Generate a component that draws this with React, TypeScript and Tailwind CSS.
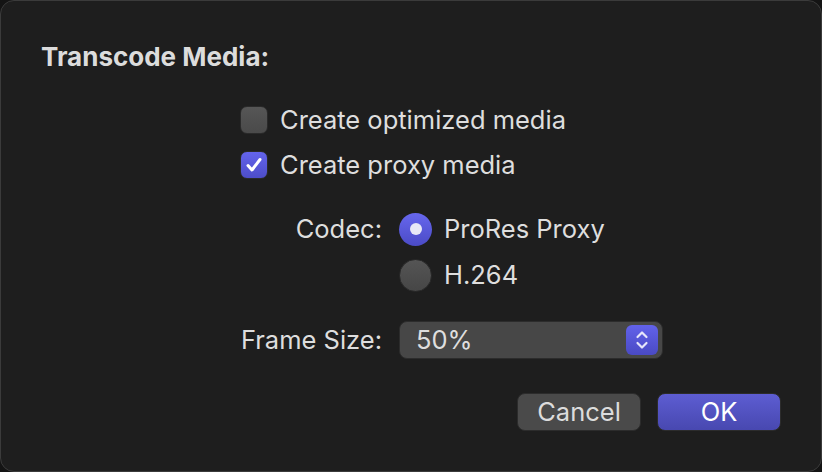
import React from "react";

export default function App() {
  return (
    <div className="w-[822px] h-[472px] bg-[#141414]" style={{ fontFamily: "Inter, 'Noto Sans', sans-serif" }}>
      <div className="w-full h-full rounded-[14px] border border-[#3b3b3b] bg-[#1e1e1e] flex flex-col text-[#dedede] antialiased">
        <div className="pl-[40px] pt-[40px] text-[26px] leading-[32px] font-bold text-[#dcdcdc]">Transcode Media:</div>

        <div className="mt-[33px] pl-[239px] grid grid-cols-[142px_1fr] gap-x-[17px]">
          <div className="col-span-2 flex items-center gap-[12px] h-[28px]">
            <div className="w-[28px] h-[28px] rounded-[7px] bg-gradient-to-b from-[#565656] to-[#4a4a4a] border border-[#2a2a2a]" />
            <span className="text-[25.5px] leading-[28px]">Create optimized media</span>
          </div>
          <div className="col-span-2 flex items-center gap-[12px] h-[28px] mt-[17px]">
            <div className="w-[28px] h-[28px] rounded-[7px] bg-gradient-to-b from-[#6464ec] to-[#4d4dc9] border border-[#2a2a2a] flex items-center justify-center">
              <svg width="20" height="20" viewBox="0 0 20 20" fill="none">
                <path d="M4 10.5 L8 15 L16 4.5" stroke="white" strokeWidth="3" strokeLinecap="round" strokeLinejoin="round" />
              </svg>
            </div>
            <span className="text-[25.5px] leading-[28px]">Create proxy media</span>
          </div>

          <div className="mt-[33px] h-[34px] flex items-center justify-end text-[25.5px]">Codec:</div>
          <div className="mt-[33px] h-[34px] flex items-center gap-[12px]">
            <div className="w-[33px] h-[33px] rounded-full bg-gradient-to-b from-[#6767ee] to-[#4b4bc6] flex items-center justify-center">
              <div className="w-[12px] h-[12px] rounded-full bg-[#e8e8f6]" />
            </div>
            <span className="text-[25.5px]">ProRes Proxy</span>
          </div>
          <div />
          <div className="mt-[12px] h-[34px] flex items-center gap-[12px]">
            <div className="w-[33px] h-[33px] rounded-full bg-gradient-to-b from-[#555555] to-[#464646] border border-[#2a2a2a]" />
            <span className="text-[25.5px]">H.264</span>
          </div>

          <div className="mt-[29px] h-[38px] flex items-center justify-end text-[25.5px]">Frame Size:</div>
          <div className="mt-[29px] h-[38px] w-[264px] rounded-[8px] bg-[#474747] border border-[#2c2c2c] flex items-center justify-between pl-[16px] pr-[4px]">
            <span className="text-[25.5px]">50%</span>
            <div className="w-[32px] h-[30px] rounded-[6px] bg-gradient-to-b from-[#6262ea] to-[#4a4ac4] flex items-center justify-center">
              <svg width="16" height="22" viewBox="0 0 16 22" fill="none">
                <path d="M3.5 8 L8 3.5 L12.5 8" stroke="#e6e6fa" strokeWidth="2.2" strokeLinecap="round" strokeLinejoin="round" />
                <path d="M3.5 14 L8 18.5 L12.5 14" stroke="#e6e6fa" strokeWidth="2.2" strokeLinecap="round" strokeLinejoin="round" />
              </svg>
            </div>
          </div>
        </div>

        <div className="mt-[34px] flex justify-end gap-[16px] pr-[40px]">
          <div className="w-[124px] h-[38px] rounded-[8px] bg-[#4a4a4a] border border-[#2c2c2c] flex items-center justify-center text-[25.5px] text-[#dcdcdc]">Cancel</div>
          <div className="w-[124px] h-[38px] rounded-[8px] bg-gradient-to-b from-[#5d5dd2] to-[#4848b0] border border-[#2c2c2c] flex items-center justify-center text-[25.5px] text-white">OK</div>
        </div>
      </div>
    </div>
  );
}
